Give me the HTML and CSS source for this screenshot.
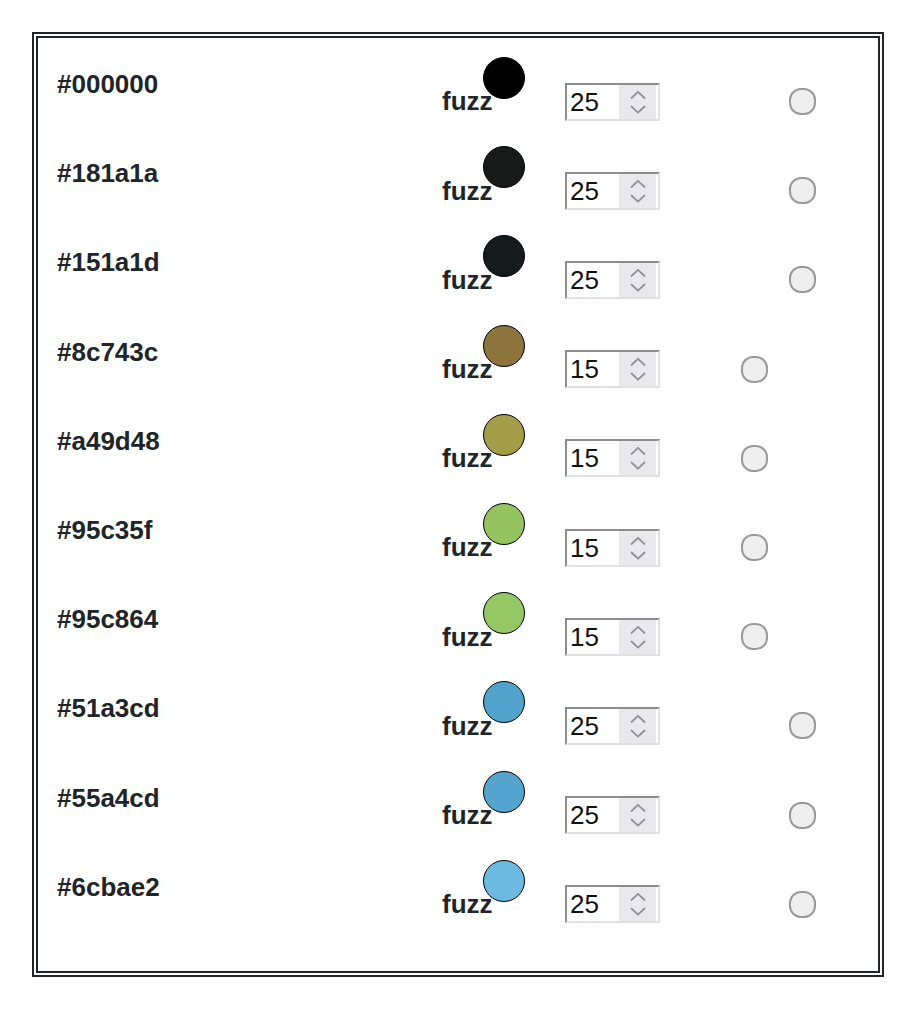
FILE: index.html
```html
<!DOCTYPE html>
<html>
<head>
<meta charset="utf-8">
<link rel="stylesheet" href="styles.css">
</head>
<body>
<div class="panel">
  <div class="row">
    <div class="hex">#000000</div>
    <div class="swatch-group"><span class="fuzz">fuzz</span><span class="swatch" style="background:#000000"></span></div>
    <div class="num"><span class="val">25</span><span class="spin"><svg width="16" height="34" viewBox="0 0 16 34"><path d="M1.5 13 L8 6.8 L14.5 13 M1.5 21.5 L8 27.7 L14.5 21.5" fill="none" stroke="#8f8f9d" stroke-width="1.8" stroke-linecap="round" stroke-linejoin="round"/></svg></span></div>
    <div class="radio wide"></div>
  </div>
  <div class="row">
    <div class="hex">#181a1a</div>
    <div class="swatch-group"><span class="fuzz">fuzz</span><span class="swatch" style="background:#181a1a"></span></div>
    <div class="num"><span class="val">25</span><span class="spin"><svg width="16" height="34" viewBox="0 0 16 34"><path d="M1.5 13 L8 6.8 L14.5 13 M1.5 21.5 L8 27.7 L14.5 21.5" fill="none" stroke="#8f8f9d" stroke-width="1.8" stroke-linecap="round" stroke-linejoin="round"/></svg></span></div>
    <div class="radio wide"></div>
  </div>
  <div class="row">
    <div class="hex">#151a1d</div>
    <div class="swatch-group"><span class="fuzz">fuzz</span><span class="swatch" style="background:#151a1d"></span></div>
    <div class="num"><span class="val">25</span><span class="spin"><svg width="16" height="34" viewBox="0 0 16 34"><path d="M1.5 13 L8 6.8 L14.5 13 M1.5 21.5 L8 27.7 L14.5 21.5" fill="none" stroke="#8f8f9d" stroke-width="1.8" stroke-linecap="round" stroke-linejoin="round"/></svg></span></div>
    <div class="radio wide"></div>
  </div>
  <div class="row">
    <div class="hex">#8c743c</div>
    <div class="swatch-group"><span class="fuzz">fuzz</span><span class="swatch" style="background:#8c743c"></span></div>
    <div class="num"><span class="val">15</span><span class="spin"><svg width="16" height="34" viewBox="0 0 16 34"><path d="M1.5 13 L8 6.8 L14.5 13 M1.5 21.5 L8 27.7 L14.5 21.5" fill="none" stroke="#8f8f9d" stroke-width="1.8" stroke-linecap="round" stroke-linejoin="round"/></svg></span></div>
    <div class="radio narrow"></div>
  </div>
  <div class="row">
    <div class="hex">#a49d48</div>
    <div class="swatch-group"><span class="fuzz">fuzz</span><span class="swatch" style="background:#a49d48"></span></div>
    <div class="num"><span class="val">15</span><span class="spin"><svg width="16" height="34" viewBox="0 0 16 34"><path d="M1.5 13 L8 6.8 L14.5 13 M1.5 21.5 L8 27.7 L14.5 21.5" fill="none" stroke="#8f8f9d" stroke-width="1.8" stroke-linecap="round" stroke-linejoin="round"/></svg></span></div>
    <div class="radio narrow"></div>
  </div>
  <div class="row">
    <div class="hex">#95c35f</div>
    <div class="swatch-group"><span class="fuzz">fuzz</span><span class="swatch" style="background:#95c35f"></span></div>
    <div class="num"><span class="val">15</span><span class="spin"><svg width="16" height="34" viewBox="0 0 16 34"><path d="M1.5 13 L8 6.8 L14.5 13 M1.5 21.5 L8 27.7 L14.5 21.5" fill="none" stroke="#8f8f9d" stroke-width="1.8" stroke-linecap="round" stroke-linejoin="round"/></svg></span></div>
    <div class="radio narrow"></div>
  </div>
  <div class="row">
    <div class="hex">#95c864</div>
    <div class="swatch-group"><span class="fuzz">fuzz</span><span class="swatch" style="background:#95c864"></span></div>
    <div class="num"><span class="val">15</span><span class="spin"><svg width="16" height="34" viewBox="0 0 16 34"><path d="M1.5 13 L8 6.8 L14.5 13 M1.5 21.5 L8 27.7 L14.5 21.5" fill="none" stroke="#8f8f9d" stroke-width="1.8" stroke-linecap="round" stroke-linejoin="round"/></svg></span></div>
    <div class="radio narrow"></div>
  </div>
  <div class="row">
    <div class="hex">#51a3cd</div>
    <div class="swatch-group"><span class="fuzz">fuzz</span><span class="swatch" style="background:#51a3cd"></span></div>
    <div class="num"><span class="val">25</span><span class="spin"><svg width="16" height="34" viewBox="0 0 16 34"><path d="M1.5 13 L8 6.8 L14.5 13 M1.5 21.5 L8 27.7 L14.5 21.5" fill="none" stroke="#8f8f9d" stroke-width="1.8" stroke-linecap="round" stroke-linejoin="round"/></svg></span></div>
    <div class="radio wide"></div>
  </div>
  <div class="row">
    <div class="hex">#55a4cd</div>
    <div class="swatch-group"><span class="fuzz">fuzz</span><span class="swatch" style="background:#55a4cd"></span></div>
    <div class="num"><span class="val">25</span><span class="spin"><svg width="16" height="34" viewBox="0 0 16 34"><path d="M1.5 13 L8 6.8 L14.5 13 M1.5 21.5 L8 27.7 L14.5 21.5" fill="none" stroke="#8f8f9d" stroke-width="1.8" stroke-linecap="round" stroke-linejoin="round"/></svg></span></div>
    <div class="radio wide"></div>
  </div>
  <div class="row">
    <div class="hex">#6cbae2</div>
    <div class="swatch-group"><span class="fuzz">fuzz</span><span class="swatch" style="background:#6cbae2"></span></div>
    <div class="num"><span class="val">25</span><span class="spin"><svg width="16" height="34" viewBox="0 0 16 34"><path d="M1.5 13 L8 6.8 L14.5 13 M1.5 21.5 L8 27.7 L14.5 21.5" fill="none" stroke="#8f8f9d" stroke-width="1.8" stroke-linecap="round" stroke-linejoin="round"/></svg></span></div>
    <div class="radio wide"></div>
  </div>
</div>
</body>
</html>
```
FILE: styles.css
```css
html, body {
  margin: 0;
  background: #fff;
}
body {
  padding: 32px;
  font-family: "Liberation Sans", Arial, sans-serif;
  color: #212529;
}
.panel {
  box-sizing: border-box;
  width: 852px;
  height: 945px;
  border: 6px double #212529;
  padding: 19px 0 22px 19px;
}
.row {
  display: flex;
  height: 89.2px;
  align-items: center;
}
.hex {
  align-self: flex-start;
  margin-top: 12px;
  width: 385px;
  font-size: 26px;
  line-height: 31.2px;
  font-weight: bold;
}
.swatch-group {
  display: flex;
  align-self: stretch;
  align-items: center;
}
.fuzz {
  font-size: 26px;
  line-height: 31.2px;
  font-weight: bold;
  margin-top: 1px;
}
.swatch {
  align-self: flex-start;
  margin-left: -9.5px;
  width: 40px;
  height: 40px;
  border: 1.3px solid #000;
  border-radius: 50%;
}
.num {
  box-sizing: border-box;
  display: flex;
  width: 95px;
  height: 38px;
  margin-left: 40px;
  border-style: solid;
  border-width: 2px;
  border-color: #8d8d8d #e0e0e0 #e0e0e0 #8d8d8d;
  background: #fff;
  padding-right: 2px;
}
.val {
  flex: 1;
  font-size: 26px;
  line-height: 34px;
  padding-left: 3px;
  color: #111;
}
.spin {
  width: 37px;
  background: #e9e9ed;
  display: flex;
  align-items: center;
  justify-content: center;
}
.radio {
  box-sizing: border-box;
  width: 27px;
  height: 27px;
  border: 2px solid #9a9a9a;
  border-radius: 12px;
  background: #efefef;
}
.radio.wide {
  margin-left: 129px;
}
.radio.narrow {
  margin-left: 81px;
}
```
